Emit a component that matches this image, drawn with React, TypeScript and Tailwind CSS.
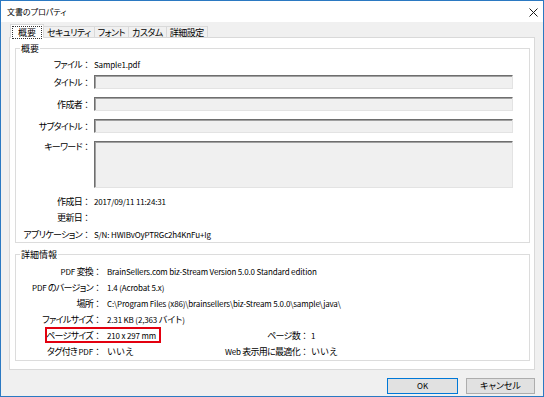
import React from 'react'

function Label({ children, className }: { children: React.ReactNode; className?: string }) {
  return (
    <div className={`text-right whitespace-nowrap ${className ?? ''}`}>
      <span className="[font-feature-settings:'palt'] tracking-[-0.7px]">{children}</span>：
    </div>
  )
}

// latin text in Meiryo UI is narrow; shrink it a little
function L({ children }: { children: React.ReactNode }) {
  return <span className="text-[8px] tracking-[-0.15px]">{children}</span>
}

function TextBox({ tall = false }: { tall?: boolean }) {
  return (
    <div
      className={`w-[419px] ${tall ? 'h-[47px]' : 'h-[14px]'} bg-[#f0f0f0] border border-t-[#6e6e6e] border-l-[#6e6e6e] border-b-[#e3e3e3] border-r-[#e3e3e3] shadow-[inset_1px_1px_0_#a0a0a0]`}
    />
  )
}

const tabs = ['概要', 'セキュリティ', 'フォント', 'カスタム', '詳細設定']

const detailRows: { label: React.ReactNode; value: React.ReactNode; key: string }[] = [
  {
    key: 'conv',
    label: (
      <>
        <L>PDF</L> 変換
      </>
    ),
    value: <L>BrainSellers.com biz-Stream Version 5.0.0 Standard edition</L>,
  },
  {
    key: 'ver',
    label: (
      <>
        <L>PDF</L> のバージョン
      </>
    ),
    value: <L>1.4 (Acrobat 5.x)</L>,
  },
  {
    key: 'loc',
    label: '場所',
    value: <L>C:\Program Files (x86)\brainsellers\biz-Stream 5.0.0\sample\java\</L>,
  },
  {
    key: 'size',
    label: 'ファイルサイズ',
    value: (
      <>
        <L>2.31 KB (2,363 </L>
        <span className="[font-feature-settings:'palt']">バイト</span>
        <L>)</L>
      </>
    ),
  },
]

export default function App() {
  return (
    <div className="w-[544px] h-[397px] flex flex-col border border-[#2b79c2] bg-[#f0f0f0] text-[9px] leading-[13px] text-black [font-family:'Noto_Sans_CJK_JP','Noto_Sans',sans-serif]">
      {/* title bar */}
      <div className="h-[21px] shrink-0 bg-white flex items-center justify-between pl-[6px] pr-[5px]">
        <span className="text-[8px] [font-feature-settings:'palt']">文書のプロパティ</span>
        <svg width="9" height="9" viewBox="0 0 9 9" className="mt-[1px]">
          <path d="M0.5 0.5 L8.5 8.5 M8.5 0.5 L0.5 8.5" stroke="#1a1a1a" strokeWidth="1" fill="none" />
        </svg>
      </div>

      <div className="flex-1 flex flex-col px-[8px] pt-[2px]">
        {/* tabs */}
        <div className="flex items-end h-[13px] pl-[1px] relative z-10">
          {tabs.map((t, i) =>
            i === 0 ? (
              <div
                key={t}
                className="h-[14px] -mb-px bg-white border border-b-0 border-[#d9d9d9] px-[1px] pt-[1px] flex items-start"
              >
                <span className="border border-dotted border-[#333] px-[5px] leading-[11px]">{t}</span>
              </div>
            ) : (
              <div
                key={t}
                className="h-[11px] -ml-px bg-[#f0f0f0] border border-b-0 border-[#d9d9d9] px-[3px] flex items-center leading-[11px] tracking-[-0.5px] [font-feature-settings:'palt']"
              >
                {t}
              </div>
            ),
          )}
        </div>

        {/* panel */}
        <div className="h-[333px] shrink-0 bg-white border border-[#d9d9d9] pl-[5px] pr-[4px] pt-[4px]">
          <fieldset className="border border-[#dcdcdc] m-0 p-0 pb-[1px]">
            <legend className="ml-[4px] px-[1px] leading-[13px]">概要</legend>
            <div className="flex flex-col">
              <div className="flex items-center h-[14px] mt-[2px]">
                <Label className="w-[75px]">ファイル</Label>
                <span className="ml-[3px]">
                  <L>Sample1.pdf</L>
                </span>
              </div>
              {['タイトル', '作成者', 'サブタイトル'].map((l, i) => (
                <div key={l} className={`flex items-center h-[14px] ${i === 0 ? 'mt-[4px]' : 'mt-[8px]'}`}>
                  <Label className="w-[75px]">{l}</Label>
                  <div className="ml-[3px]">
                    <TextBox />
                  </div>
                </div>
              ))}
              <div className="flex items-start mt-[8px]">
                <Label className="w-[75px] mt-[-1px]">キーワード</Label>
                <div className="ml-[3px]">
                  <TextBox tall />
                </div>
              </div>
              <div className="flex items-center h-[14px] mt-[6px]">
                <Label className="w-[75px]">作成日</Label>
                <span className="ml-[3px]">
                  <L>2017/09/11 11:24:31</L>
                </span>
              </div>
              <div className="flex items-center h-[14px] mt-[2px]">
                <Label className="w-[75px]">更新日</Label>
              </div>
              <div className="flex items-center h-[14px] mt-[3px]">
                <Label className="w-[75px]">アプリケーション</Label>
                <span className="ml-[3px]">
                  <L>S/N: HWIBvOyPTRGc2h4KnFu+Ig</L>
                </span>
              </div>
            </div>
          </fieldset>

          <fieldset className="border border-[#dcdcdc] m-0 p-0 mt-[5px] pb-[1px]">
            <legend className="ml-[4px] px-[1px] leading-[13px]">詳細情報</legend>
            <div className="flex flex-col mt-[2px]">
              {detailRows.map((r) => (
                <div key={r.key} className="flex items-center h-[16px]">
                  <Label className="w-[86px]">{r.label}</Label>
                  <span className="ml-[5px] whitespace-nowrap">{r.value}</span>
                </div>
              ))}
              <div className="relative flex items-center h-[16px]">
                <Label className="w-[86px]">ページサイズ</Label>
                <span className="ml-[5px] w-[60px] whitespace-nowrap">
                  <L>210 x 297 mm</L>
                </span>
                <Label className="w-[142px]">ページ数</Label>
                <span className="ml-[2px]">
                  <L>1</L>
                </span>
                <div className="absolute left-[29px] top-0 w-[116px] h-[16px] border-2 border-[#e3000f]" />
              </div>
              <div className="flex items-center h-[16px]">
                <Label className="w-[86px]">
                  タグ付き <L>PDF</L>
                </Label>
                <span className="ml-[5px] w-[60px]">いいえ</span>
                <Label className="w-[142px]">
                  <L>Web</L> 表示用に最適化
                </Label>
                <span className="ml-[2px]">いいえ</span>
              </div>
            </div>
          </fieldset>
        </div>

        {/* buttons */}
        <div className="flex justify-end gap-[8px] mt-[8px]">
          <button className="w-[71px] h-[16px] bg-[#e1e1e1] border border-[#0078d7] leading-[14px]">
            <L>OK</L>
          </button>
          <button className="w-[69px] h-[16px] bg-[#e1e1e1] border border-[#adadad] leading-[14px] [font-feature-settings:'palt']">
            キャンセル
          </button>
        </div>
      </div>
    </div>
  )
}
